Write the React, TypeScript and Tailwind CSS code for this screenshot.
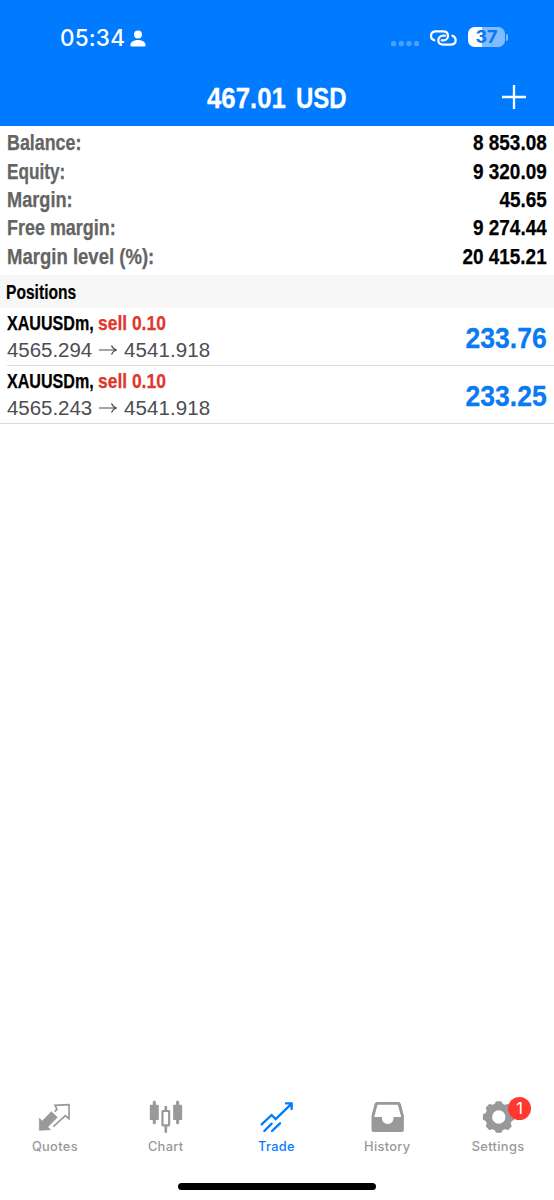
import React from "react";

const account = [
  { label: "Balance:", value: "8 853.08", fit: "scale-x-[0.83]" },
  { label: "Equity:", value: "9 320.09", fit: "scale-x-[0.8]" },
  { label: "Margin:", value: "45.65", fit: "scale-x-[0.845]" },
  { label: "Free margin:", value: "9 274.44", fit: "scale-x-[0.835]" },
  { label: "Margin level (%):", value: "20 415.21", fit: "scale-x-[0.862]" },
];

const positions = [
  { open: "4565.294", current: "4541.918", profit: "233.76" },
  { open: "4565.243", current: "4541.918", profit: "233.25" },
];

function gearPath(cx: number, cy: number) {
  const pts: string[] = [];
  for (let i = 0; i < 8; i++) {
    const base = i * 45;
    const shape: [number, number][] = [
      [-15, 38],
      [-8, 45],
      [8, 45],
      [15, 38],
    ];
    shape.forEach(([a, r]) => {
      const t = ((base + a) * Math.PI) / 180;
      pts.push(`${(cx + r * Math.cos(t)).toFixed(1)} ${(cy + r * Math.sin(t)).toFixed(1)}`);
    });
  }
  return `M${pts.join("L")}Z M${cx - 23} ${cy}a23 23 0 1 0 46 0a23 23 0 1 0 -46 0Z`;
}

function StatusBar() {
  return (
    <div className="flex h-[71px] items-start justify-between pt-[26px] pr-[46px] pl-[60px]">
      <div className="flex h-6 items-center">
        <span className="w-[70px] font-[Inter] text-[22.5px] leading-6 font-medium tracking-[0.2px]">05:34</span>
        <svg className="h-[17px] w-4" viewBox="0 0 16 17" fill="currentColor">
          <circle cx="8" cy="4.4" r="4" />
          <path d="M.4 15.2C.4 12.2 3.6 10 8 10s7.6 2.2 7.6 5.2c0 .8-.5 1.2-1.2 1.2H1.6c-.7 0-1.2-.4-1.2-1.2Z" />
        </svg>
      </div>
      <div className="flex h-[22px] items-center">
        <svg className="mt-[13px] mr-[10px] h-6 w-7" viewBox="0 0 28 24" fill="#48a0ff">
          <rect x="0" y="9" width="5.2" height="5.2" rx="1.8" />
          <rect x="7.7" y="9" width="5.2" height="5.2" rx="1.8" />
          <rect x="15.4" y="9" width="5.2" height="5.2" rx="1.8" />
          <rect x="23.1" y="9" width="4.9" height="5.2" rx="1.8" />
        </svg>
        <svg className="mt-px mr-[11px] h-[18px] w-7" viewBox="456 86 84 54" fill="none" stroke="currentColor" strokeWidth="6.500" strokeLinecap="round">
          <path d="M472 120C465 118 462 113 462 107C462 98 468 93 477 93H498C507 93 513 98 513 106C513 114 507 120 499 120H494" />
          <path d="M526 106C533 108 536 113 536 119C536 128 530 133 521 133H499C490 133 484 128 484 120C484 112 490 106 499 106H504" />
        </svg>
        <div className="flex h-5 w-[37px] items-center justify-center rounded-[6.5px] bg-[linear-gradient(to_right,#fff_37%,#80bcff_37%)]">
          <span className="font-[Inter] text-[18px] leading-5 font-bold text-[#0c76f0]">37</span>
        </div>
        <div className="ml-px h-[7px] w-[2px] rounded-r-full bg-[#80bcff]" />
      </div>
    </div>
  );
}

function QuotesIcon() {
  return (
    <svg className="h-9 w-[60px]" viewBox="76 39 180 108" fill="#999">
      <path d="M119 136V100L128 108L155 80L173 97L144 126L153 134Z" stroke="#999" strokeWidth="2" />
      <path d="M165 80L172 73L166 61L208 59V101L197 92L161 125" fill="none" stroke="#999" strokeWidth="5" />
    </svg>
  );
}

function ChartIcon() {
  return (
    <svg className="h-9 w-[60px]" viewBox="408.6 39 180 108" fill="#999">
      <rect x="459" y="47" width="9" height="71" rx="4" />
      <rect x="450" y="59" width="27" height="46" rx="3" />
      <rect x="529" y="47" width="9" height="71" rx="4" />
      <rect x="520" y="59" width="27" height="46" rx="3" />
      <rect x="494" y="62" width="8" height="82" rx="4" />
      <rect x="488" y="78" width="20" height="43" rx="1" fill="#fff" stroke="#999" strokeWidth="6.500" />
    </svg>
  );
}

function TradeIcon() {
  return (
    <svg className="h-9 w-[60px]" viewBox="141 39 180 108" fill="none" stroke="#007aff" strokeWidth="7" strokeLinecap="round">
      <path d="M185 118L215 90L227 102L275 56M258 55H275V72M193 138L215 116M216 138L240 115" />
    </svg>
  );
}

function HistoryIcon() {
  return (
    <svg className="h-9 w-[60px]" viewBox="11.4 39 180 108" fill="#999">
      <path
        fillRule="evenodd"
        d="M69 51H132Q138 51 140 57L149 92V135Q149 141 143 141H58Q52 141 52 135V92L61 57Q63 51 69 51ZM70 59L60 96H83Q83 117 101 117Q118 117 118 96H141L131 59Z"
      />
    </svg>
  );
}

function SettingsIcon() {
  return (
    <svg className="h-9 w-[60px]" viewBox="343.8 39 180 108" fill="#999" stroke="#999" strokeWidth="6" strokeLinejoin="round">
      <path fillRule="evenodd" d={gearPath(433, 96)} />
    </svg>
  );
}

const tabs = [
  { label: "Quotes", Icon: QuotesIcon },
  { label: "Chart", Icon: ChartIcon },
  { label: "Trade", Icon: TradeIcon, active: true },
  { label: "History", Icon: HistoryIcon },
  { label: "Settings", Icon: SettingsIcon, badge: "1" },
];

export default function App() {
  return (
    <div className="flex h-[1200px] w-[554px] flex-col overflow-hidden bg-white font-['Liberation_Sans',sans-serif]">
      <header className="h-[125.7px] shrink-0 bg-[#007aff] text-white">
        <StatusBar />
        <div className="grid h-[52px] grid-cols-[1fr_auto_1fr] items-center">
          <div />
          <h1 className="flex w-[140px] pt-px text-[30px] leading-[49px] font-bold whitespace-nowrap [-webkit-text-stroke:0.3px]">
            <span className="w-[88.500px] origin-left scale-x-[0.86]">467.01</span>
            <span className="origin-left scale-x-[0.8]">USD</span>
          </h1>
          <svg className="mr-7 h-6 w-6 justify-self-end" viewBox="0 0 24 24" stroke="currentColor" strokeWidth="2.3">
            <path d="M0 12H24M12 0V24" />
          </svg>
        </div>
      </header>

      <section className="h-[149.5px] shrink-0 px-[7px] pt-[3.800px] font-bold [-webkit-text-stroke:0.25px]">
        {account.map((row) => (
          <div key={row.label} className="flex h-[28.33px] justify-between text-[21.5px] leading-[28.33px] whitespace-nowrap">
            <span className={"origin-left text-[#646464] " + row.fit}>{row.label}</span>
            <span className="origin-right scale-x-[0.88] text-black">{row.value}</span>
          </div>
        ))}
      </section>

      <div className="flex h-[33.3px] shrink-0 bg-[#f7f7f7] pt-[0.8px] pl-[6px] text-[19.5px] leading-[33.3px] font-bold text-black [-webkit-text-stroke:0.2px]">
        <span className="origin-left scale-x-[0.8]">Positions</span>
      </div>

      {positions.map((p, i) => (
        <div key={p.open} className="flex h-[58px] shrink-0 flex-col">
          <div className="flex h-[57px] justify-between px-[7px]">
            <div className="pt-[2px]">
              <div className="flex h-[26px] text-[20.5px] leading-[26px] font-bold whitespace-nowrap [-webkit-text-stroke:0.25px]">
                <span className="w-[91px] origin-left scale-x-[0.785] text-black">XAUUSDm,</span>
                <span className="origin-left scale-x-[0.85] text-[#e0362c]">sell 0.10</span>
              </div>
              <div className="flex h-[27px] items-center text-[20.5px] leading-[27px] text-[#4d4d52]">
                <span className="w-[92px] tracking-[-0.05px]">{p.open}</span>
                <svg className="h-3 w-[18px]" viewBox="0 0 18 12" fill="none" stroke="currentColor" strokeWidth="1.2">
                  <path d="M0 6H17M12.500 1.500Q14 5 17.500 6Q14 7 12.500 10.500" />
                </svg>
                <span className="ml-[7px] tracking-[0.1px]">{p.current}</span>
              </div>
            </div>
            <span className="origin-right scale-x-[0.885] pt-px text-[30px] leading-[58px] font-bold text-[#0a7af2] [-webkit-text-stroke:0.3px]">{p.profit}</span>
          </div>
          <div className={i === 0 ? "ml-[7px] h-px shrink-0 bg-[#dcdcdc]" : "h-px shrink-0 bg-[#dcdcdc]"} />
        </div>
      ))}

      <main className="grow" />

      <nav className="grid h-[85px] shrink-0 grid-cols-5">
        {tabs.map(({ label, Icon, active, badge }) => (
          <div key={label} className="relative flex h-[60px] flex-col items-center">
            <Icon />
            <span className={"mt-[4px] pr-[1px] font-[Inter] text-[12.8px] leading-[18px] font-medium tracking-[0.35px] " + (active ? "text-[#0a7aff]" : "text-[#999]")}>
              {label}
            </span>
            {badge && (
              <span className="absolute top-[-1px] left-[65px] flex size-[23px] items-center justify-center rounded-full bg-[#ff3830] font-[Inter] text-[16.5px] leading-none text-white">
                {badge}
              </span>
            )}
          </div>
        ))}
      </nav>
      <div className="flex h-[17px] shrink-0 justify-center">
        <div className="h-[6.500px] w-[198px] rounded-full bg-black" />
      </div>
    </div>
  );
}
